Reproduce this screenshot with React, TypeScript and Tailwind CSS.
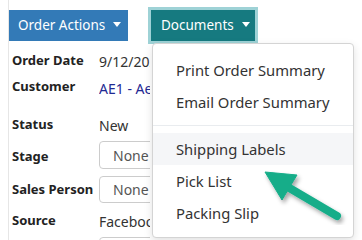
import React from 'react';

const font = "font-['Segoe_UI','Noto_Sans',sans-serif]";

function Caret() {
    return <span className="inline-block w-0 h-0 border-x-[4px] border-x-transparent border-t-[5px] border-t-white ml-[8px] translate-y-[-1px]" />;
}

function DetailRow({ label, className, labelClass, children }: { label: string; className: string; labelClass?: string; children: React.ReactNode }) {
    return (
        <div className={`flex items-center ${className}`}>
            <div className={`w-[90px] pl-[3px] whitespace-nowrap text-[13px] font-bold text-[#222] ${labelClass ?? ''}`}>{label}</div>
            <div className="w-[51px] h-full flex items-center overflow-hidden whitespace-nowrap text-[14px] text-[#333]">{children}</div>
        </div>
    );
}

function SelectBox({ text }: { text?: string }) {
    return (
        <div className="h-full w-[180px] shrink-0 border border-[#ccc] rounded-[4px] pl-[13px] flex items-center text-[14px] text-[#555]">{text}</div>
    );
}

export default function App() {
    const items = ['Print Order Summary', 'Email Order Summary'];
    const items2 = ['Shipping Labels', 'Pick List', 'Packing Slip'];

    return (
        <div className={`relative w-[362px] h-[240px] overflow-hidden bg-white ${font}`}>
            <div className="ml-[8px] h-full border-l border-[#e6e6e6]">
                {/* buttons */}
                <div className="flex pt-[10px]">
                    <button className="h-[31px] w-[119px] bg-[#337ab7] text-white text-[13.5px] pl-[9px] flex items-center whitespace-nowrap">
                        Order Actions <Caret />
                    </button>
                    <button className="ml-[23px] h-[31px] w-[104px] bg-[#167a80] text-white text-[13.5px] pl-[10px] flex items-center whitespace-nowrap ring-[3px] ring-[#9ed2d6]">
                        Documents <Caret />
                    </button>
                </div>

                {/* order details */}
                <div className="mt-[7px]">
                    <DetailRow label="Order Date" className="h-[26px]">9/12/2021</DetailRow>
                    <DetailRow label="Customer" className="h-[28px]" labelClass="-mt-[3px]">
                        <span className="text-[#1f2a93]">AE1 - Aero Express</span>
                    </DetailRow>
                    <DetailRow label="Status" className="h-[30px] mt-[8px]">New</DetailRow>
                    <DetailRow label="Stage" className="h-[28px] mt-[1px]" labelClass="mt-[3px]">
                        <SelectBox text="None" />
                    </DetailRow>
                    <DetailRow label="Sales Person" className="h-[27px] mt-[7px]">
                        <SelectBox text="None" />
                    </DetailRow>
                    <DetailRow label="Source" className="h-[26px] mt-[5px]">Facebook</DetailRow>
                    <div className="flex mt-[3px] h-[28px]">
                        <div className="w-[90px]" />
                        <div className="w-[51px] overflow-hidden">
                            <SelectBox />
                        </div>
                    </div>
                </div>
            </div>

            {/* dropdown menu */}
            <div className="absolute left-[152px] top-[43px] w-[202px] h-[195px] bg-white border border-[#d4d4d4] rounded-[4px] shadow-[0_3px_8px_rgba(0,0,0,0.12)] pt-[10px] text-[14.8px] text-[#333]">
                {items.map((t) => (
                    <div key={t} className="h-[32px] pl-[23px] flex items-center whitespace-nowrap">{t}</div>
                ))}
                <div className="my-[7px] h-px bg-[#e9ecef]" />
                {items2.map((t, i) => (
                    <div key={t} className={`h-[32px] pl-[23px] flex items-center whitespace-nowrap ${i === 0 ? 'bg-[#f5f6f8]' : ''}`}>{t}</div>
                ))}
            </div>

            {/* annotation arrow */}
            <svg className="absolute left-0 top-0 pointer-events-none" width="362" height="240" viewBox="0 0 362 240">
                <defs>
                    <filter id="sh" x="-20%" y="-20%" width="140%" height="140%">
                        <feDropShadow dx="2" dy="3" stdDeviation="2" floodColor="#000" floodOpacity="0.35" />
                    </filter>
                </defs>
                <g filter="url(#sh)" fill="#14ad89" stroke="#14ad89">
                    <line x1="337" y1="216" x2="286" y2="186" strokeWidth="8" strokeLinecap="round" />
                    <polygon points="265,172 297,175 282,200" strokeWidth="1" strokeLinejoin="round" />
                </g>
            </svg>
        </div>
    );
}
